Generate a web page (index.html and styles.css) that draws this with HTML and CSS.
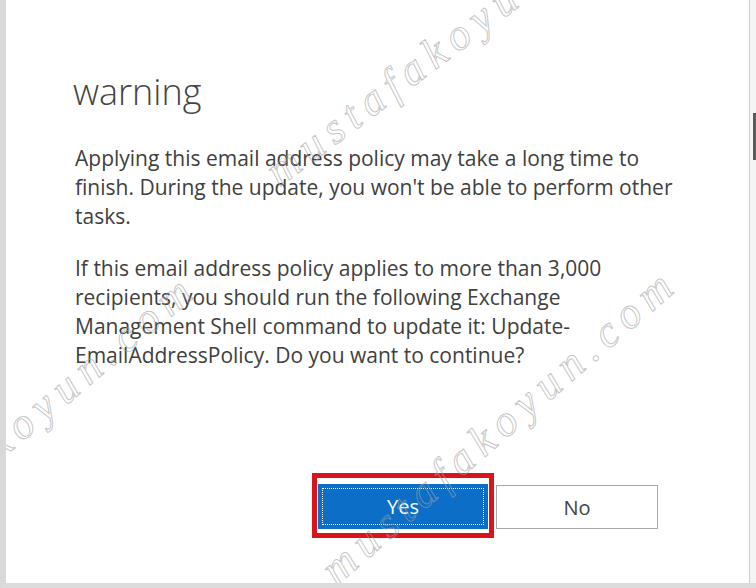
FILE: index.html
```html
<!DOCTYPE html>
<html lang="en">
<head>
<meta charset="utf-8">
<title>warning</title>
<link rel="stylesheet" href="styles.css">
</head>
<body>
<div class="frame">
  <div class="dialog">
    <h1 class="title">warning</h1>
    <div class="message">
      <p>Applying this email address policy may take a long time to<br>finish. During the update, you won't be able to perform other<br>tasks.</p>
      <p>If this email address policy applies to more than 3,000<br>recipients, you should run the following Exchange<br>Management Shell command to update it: Update-<br>EmailAddressPolicy. Do you want to continue?</p>
    </div>
    <div class="actions">
      <div class="highlight"><button class="btn btn-primary">Yes</button></div>
      <button class="btn btn-secondary">No</button>
    </div>
  </div>
  <div class="scroll-edge"><span class="thumb"></span></div>
  <div class="watermarks" aria-hidden="true">
    <span class="wm wm-a">mustafakoyun.com</span>
    <span class="wm wm-b">mustafakoyun.com</span>
    <span class="wm wm-c">mustafakoyun.com</span>
  </div>
</div>
</body>
</html>
```
FILE: styles.css
```css
html, body {
  margin: 0;
  padding: 0;
  background: #ffffff;
}

body {
  width: 756px;
  height: 588px;
  overflow: hidden;
  font-family: "Open Sans", "Noto Sans", sans-serif;
}

.frame {
  position: relative;
  display: flex;
  width: 756px;
  height: 588px;
  box-sizing: border-box;
  border-left: 6px solid #d9d9d9;
  border-bottom: 5px solid #dcdcdc;
  overflow: hidden;
}

.dialog {
  flex: 1;
  display: flex;
  flex-direction: column;
  padding-left: 67px;
  border-right: 1px solid #cfcfcf;
}

.title {
  margin: 67px 0 0 0;
  font-size: 36px;
  line-height: 50px;
  font-weight: 300;
  color: #444444;
}

.message {
  margin-top: 27px;
  margin-left: 2px;
  font-size: 21px;
  line-height: 29px;
  color: #404040;
  white-space: nowrap;
}

.message p {
  margin: 0 0 23px 0;
}

.message p:last-child {
  margin-bottom: 0;
}

.actions {
  display: flex;
  align-items: flex-start;
  justify-content: flex-end;
  margin-top: 103px;
  padding-right: 91px;
}

.highlight {
  border: 5px solid #d9141c;
  padding: 6px 1px 4px 1px;
}

.btn {
  display: block;
  margin: 0;
  padding: 0;
  font-family: "Open Sans", "Noto Sans", sans-serif;
  font-size: 20px;
  box-sizing: border-box;
}

.btn-primary {
  width: 170px;
  height: 45px;
  border: none;
  background: #0c6ec6;
  color: #ffffff;
  outline: 1px dotted #ffffff;
  outline-offset: -5px;
}

.btn-secondary {
  width: 162px;
  height: 44px;
  margin-top: 12px;
  margin-left: 2px;
  border: 1px solid #a8a8a8;
  background: #ffffff;
  color: #444444;
}

.scroll-edge {
  width: 6px;
  background: #f4f4f4;
  display: flex;
  flex-direction: column;
  align-items: flex-end;
}

.thumb {
  display: block;
  width: 3px;
  height: 47px;
  margin-top: 113px;
  background: #5a5a5a;
}

.watermarks {
  position: absolute;
  inset: 0;
  pointer-events: none;
}

.wm {
  position: absolute;
  font-family: "Liberation Serif", serif;
  font-style: italic;
  font-size: 44px;
  line-height: 44px;
  letter-spacing: 8px;
  white-space: nowrap;
  color: transparent;
  -webkit-text-stroke: 1px rgba(160, 160, 160, 0.6);
  transform-origin: 0 100%;
}

.wm-a {
  left: 278px;
  top: 150px;
  transform: rotate(-37deg);
}

.wm-b {
  left: -150px;
  top: 548px;
  transform: rotate(-40deg);
}

.wm-c {
  left: 336px;
  top: 548px;
  transform: rotate(-41deg);
}
```
